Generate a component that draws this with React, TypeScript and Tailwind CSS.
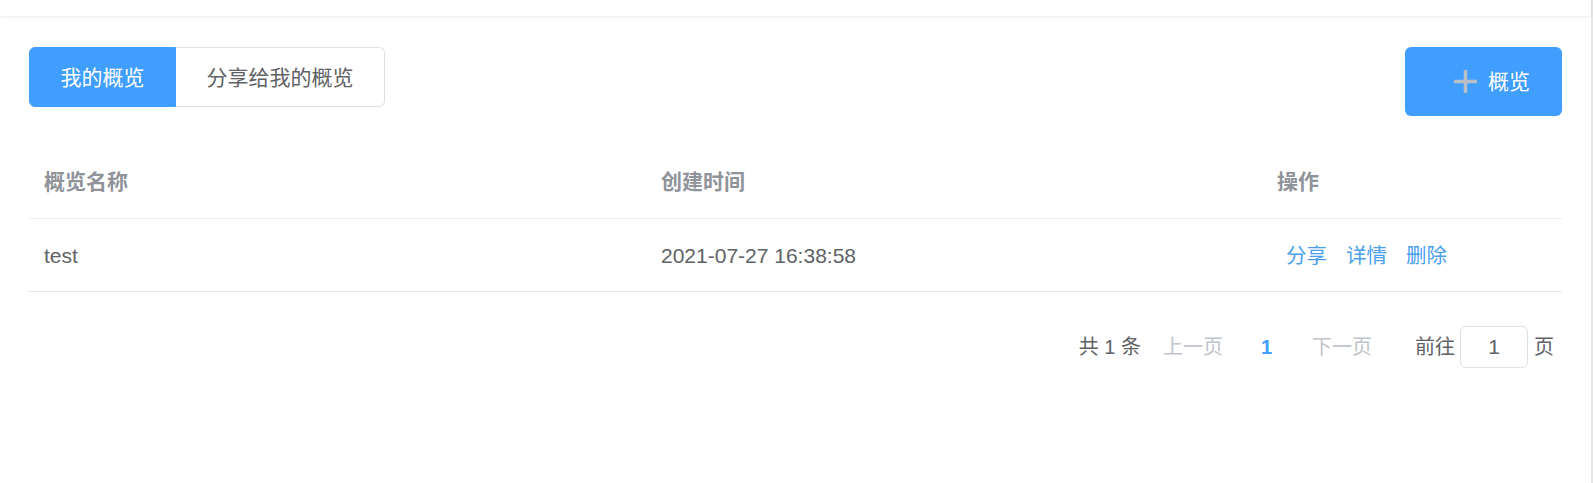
import React from "react";

const rows = [{ name: "test", created: "2021-07-27 16:38:58" }];

function PlusIcon() {
  return (
    <svg width="27" height="27" viewBox="0 0 27 27" fill="none">
      <path d="M13.5 2v23M2 13.5h23" stroke="#b9bec6" strokeWidth="3.5" />
    </svg>
  );
}

export default function App() {
  return (
    <div
      className="w-[1593px] h-[483px] bg-white overflow-hidden"
      style={{ fontFamily: '"Liberation Sans", "Noto Sans CJK SC", sans-serif' }}
    >
      <div className="w-[1593px] h-full border-r-2 border-[#e6e6e6] flex flex-col">
        {/* top bar */}
        <div className="h-[16px] bg-white shadow-[0_1px_3px_rgba(0,0,0,0.08)] shrink-0" />

        <div className="px-[29px] pt-[31px]">
          {/* toolbar */}
          <div className="flex items-start justify-between">
            <div className="flex h-[60px] text-[21px] leading-none">
              <button className="w-[147px] h-full rounded-l-[6px] bg-[#409eff] text-white border border-[#409eff]">
                我的概览
              </button>
              <button className="w-[209px] h-full rounded-r-[6px] bg-white text-[#606266] border border-l-0 border-[#dcdfe6]">
                分享给我的概览
              </button>
            </div>
            <button className="h-[69px] w-[157px] rounded-[6px] bg-[#409eff] text-white text-[21px] leading-none flex items-center pl-[47px] gap-[9px]">
              <PlusIcon />
              <span>概览</span>
            </button>
          </div>

          {/* table */}
          <div className="mt-[30px] w-[1533px]">
            <div className="grid grid-cols-[617px_616px_300px] h-[73px] border-b border-[#ebeef5] items-center text-[21px] font-bold text-[#909399]">
              <div className="pl-[15px]">概览名称</div>
              <div className="pl-[15px]">创建时间</div>
              <div className="pl-[15px]">操作</div>
            </div>
            {rows.map((r) => (
              <div
                key={r.name}
                className="grid grid-cols-[617px_616px_300px] h-[73px] border-b border-[#e4e7ed] items-center text-[21px] text-[#606266]"
              >
                <div className="pl-[15px] pt-[2px]">{r.name}</div>
                <div className="pl-[15px] pt-[2px]">{r.created}</div>
                <div className="pl-[24px] pt-[2px] flex gap-[19px] text-[#4a9ff0] text-[20.5px]">
                  <span>分享</span>
                  <span>详情</span>
                  <span>删除</span>
                </div>
              </div>
            ))}
          </div>

          {/* pagination */}
          <div className="mt-[34px] w-[1533px] flex justify-end items-center h-[42px] text-[20px] text-[#606266] pr-[8px]">
            <span>共 1 条</span>
            <span className="ml-[22px] text-[#c0c4cc]">上一页</span>
            <span className="ml-[17px] w-[53px] text-center font-bold text-[#409eff]">1</span>
            <span className="ml-[19px] text-[#c0c4cc]">下一页</span>
            <span className="ml-[43px]">前往</span>
            <div className="ml-[5px] w-[68px] h-[42px] rounded-[6px] border border-[#dcdfe6] flex items-center justify-center text-[21px]">
              1
            </div>
            <span className="ml-[6px]">页</span>
          </div>
        </div>
      </div>
    </div>
  );
}
